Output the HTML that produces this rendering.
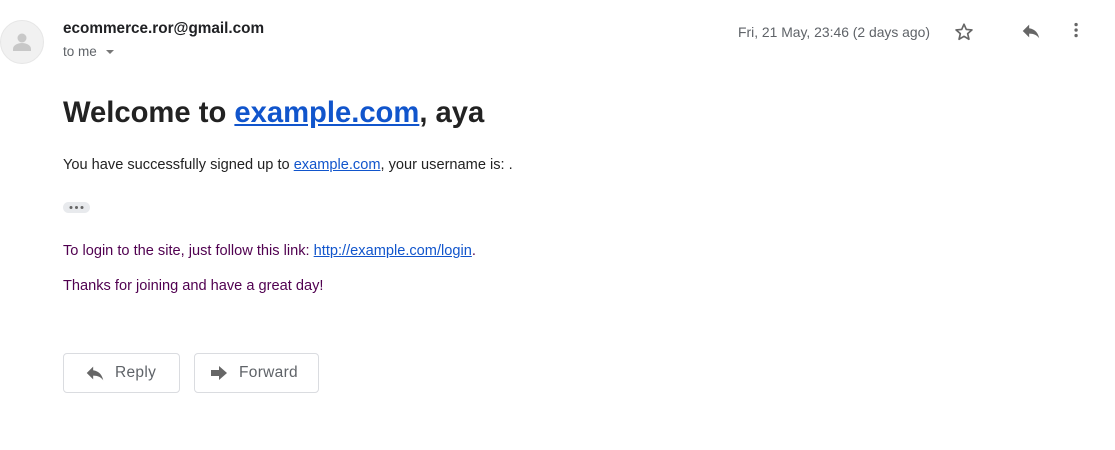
<!DOCTYPE html>
<html><head><meta charset="utf-8"><style>
body{margin:0;width:1115px;height:450px;background:#fff;font-family:"Liberation Sans",Arial,sans-serif;position:relative;overflow:hidden}
.a{position:absolute;white-space:nowrap}
a{color:#1155cc;text-decoration:underline}
.btn{position:absolute;top:353px;height:40px;border:1px solid #dadce0;border-radius:4px;box-sizing:border-box;color:#5f6368;font-size:15.5px;display:flex;align-items:center;letter-spacing:.3px}
</style></head><body>
<div class="a" style="left:0;top:20px;width:44px;height:44px;border-radius:50%;background:#f1f1f1;border:1px solid #e6e6e6;box-sizing:border-box">
<svg width="44" height="44" viewBox="0 0 44 44" style="position:absolute;left:-1px;top:-1px"><circle cx="22" cy="18" r="4.5" fill="#c8c8c8"/><path d="M13 29c0-4 5-6 9-6s9 2 9 6v2H13z" fill="#c8c8c8"/></svg></div>
<div class="a" style="left:63px;top:20px;font-size:15.3px;font-weight:bold;color:#202124">ecommerce.ror@gmail.com</div>
<div class="a" style="left:63px;top:44px;font-size:13.5px;color:#5f6368">to me <span style="display:inline-block;width:0;height:0;border-left:4px solid transparent;border-right:4px solid transparent;border-top:4px solid #777;vertical-align:middle;margin-left:5px"></span></div>
<div class="a" style="left:738px;top:24px;font-size:13.9px;color:#5f6368">Fri, 21 May, 23:46 (2 days ago)</div>
<svg class="a" style="left:953px;top:21px" width="22" height="22" viewBox="0 0 24 24"><path d="M12 3.5l2.5 5.7 6.2.5-4.7 4.1 1.4 6.1L12 16.7l-5.4 3.2 1.4-6.1-4.7-4.1 6.2-.5z" fill="none" stroke="#666" stroke-width="1.8" stroke-linejoin="round"/></svg>
<svg class="a" style="left:1020px;top:20px" width="22" height="22" viewBox="0 0 24 24"><path d="M10 9V5l-7 7 7 7v-4.1c5 0 8.5 1.6 11 5.1-1-5-4-10-11-11z" fill="#666"/></svg>
<svg class="a" style="left:1066px;top:20px" width="22" height="22" viewBox="0 0 24 24"><circle cx="11" cy="5" r="1.8" fill="#666"/><circle cx="11" cy="11" r="1.8" fill="#666"/><circle cx="11" cy="17" r="1.8" fill="#666"/></svg>
<div class="a" style="left:63px;top:97px;font-size:29.2px;font-weight:bold;color:#222">Welcome to <a href="#">example.com</a>, aya</div>
<div class="a" style="left:63px;top:157px;font-size:14.6px;color:#222">You have successfully signed up to <a href="#">example.com</a>, your username is: .</div>
<div class="a" style="left:63px;top:202px;width:27px;height:11px;border-radius:6px;background:#e8eaed"><svg width="27" height="11" style="position:absolute"><circle cx="8" cy="5.5" r="1.5" fill="#666"/><circle cx="13.5" cy="5.5" r="1.5" fill="#666"/><circle cx="19" cy="5.5" r="1.5" fill="#666"/></svg></div>
<div class="a" style="left:63px;top:243px;font-size:14.6px;color:#500050">To login to the site, just follow this link: <a href="#">http://example.com/login</a>.</div>
<div class="a" style="left:63px;top:278px;font-size:14.6px;color:#500050">Thanks for joining and have a great day!</div>
<div class="btn" style="left:63px;width:117px"><svg style="margin-left:20px" width="22" height="22" viewBox="0 0 24 24"><path d="M10 9V5l-7 7 7 7v-4.1c5 0 8.5 1.6 11 5.1-1-5-4-10-11-11z" fill="#666"/></svg><span style="margin-left:9px">Reply</span></div>
<div class="btn" style="left:194px;width:125px"><svg style="margin-left:14px" width="20" height="20" viewBox="0 0 20 20"><path d="M2 7h8V3l8 7-8 7v-4H2z" fill="#666"/></svg><span style="margin-left:10px">Forward</span></div>
</body></html>
